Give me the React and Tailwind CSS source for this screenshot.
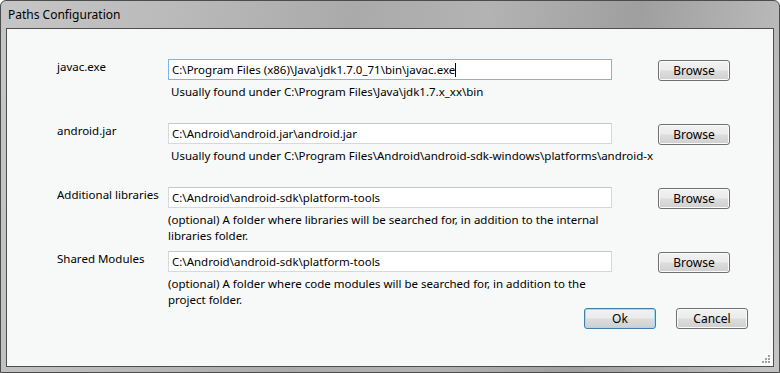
import React from 'react';

const font = { fontFamily: '"Noto Sans", "Liberation Sans", sans-serif' };

const TextBox = ({ value, focused }) => (
  <div
    className={
      'h-[21px] w-[444px] flex items-center pl-[3px] bg-white border text-[11.5px] text-black whitespace-nowrap ' +
      (focused ? 'border-[#7eb4ea]' : 'border-[#d5d8dc] border-t-[#c4c8cd]')
    }
  >
    <span>{value}</span>
    {focused && <span className="w-px h-[14px] bg-black" />}
  </div>
);

const WinButton = ({ children, primary }) => (
  <button
    className={
      'block h-[21px] w-[72px] rounded-[3px] border text-[12px] text-black leading-none ' +
      'bg-[linear-gradient(to_bottom,#f2f2f2_0%,#ebebeb_48%,#dddddd_52%,#cfcfcf_100%)] ' +
      (primary
        ? 'border-[#3c7fb1] shadow-[inset_0_0_0_1px_#9fdcf7]'
        : 'border-[#707070] shadow-[inset_0_0_0_1px_#fbfbfb]')
    }
  >
    {children}
  </button>
);

const Row = ({ label, value, focused, hint, hintPad, rowHeight }) => (
  <div className={'flex ' + rowHeight}>
    <div className="w-[111px] text-[11.5px] leading-[16px] text-black whitespace-nowrap">{label}</div>
    <div className="flex flex-col w-[444px]">
      <TextBox value={value} focused={focused} />
      <div className={'text-[11.5px] leading-[15.5px] text-black whitespace-nowrap ' + hintPad}>{hint}</div>
    </div>
    <div className="ml-[46px] flex items-start pt-px">
      <WinButton>Browse</WinButton>
    </div>
  </div>
);

const Grip = () => (
  <svg width="12" height="12" viewBox="0 0 12 12" className="absolute right-[2px] bottom-[2px]">
    {[
      [9, 3],
      [9, 6],
      [6, 6],
      [9, 9],
      [6, 9],
      [3, 9],
    ].map(([x, y]) => (
      <g key={x + '-' + y}>
        <rect x={x + 1} y={y + 1} width="2" height="2" fill="#ffffff" />
        <rect x={x} y={y} width="2" height="2" fill="#a0a0a0" />
      </g>
    ))}
  </svg>
);

const App = () => {
  return (
    <div
      className="w-[780px] h-[373px] flex flex-col rounded-t-[6px] border border-[#4c4c4c] bg-[linear-gradient(100deg,#c6c6c6_0%,#b9b9b9_22%,#aaaaaa_42%,#b3b3b3_58%,#9f9f9f_76%,#c4c4c4_100%)]"
      style={font}
    >
      <div className="h-[27px] flex items-center pl-[7px] text-[12px] text-black">Paths Configuration</div>
      <div className="relative mx-[5px] h-[339px] border border-[#4d4d4d] bg-[#f7f8f8] flex flex-col pt-[30px] pl-[50px]">
        <Row
          label="javac.exe"
          value="C:\Program Files (x86)\Java\jdk1.7.0_71\bin\javac.exe"
          focused
          hint="Usually found under C:\Program Files\Java\jdk1.7.x_xx\bin"
          hintPad="pl-[3px] pt-[4px]"
          rowHeight="h-[64px]"
        />
        <Row
          label="android.jar"
          value="C:\Android\android.jar\android.jar"
          hint="Usually found under C:\Program Files\Android\android-sdk-windows\platforms\android-x"
          hintPad="pl-[3px] pt-[4px]"
          rowHeight="h-[64px]"
        />
        <Row
          label="Additional libraries"
          value="C:\Android\android-sdk\platform-tools"
          hint={<>(optional) A folder where libraries will be searched for, in addition to the internal<br />libraries folder.</>}
          hintPad="pt-[4px]"
          rowHeight="h-[64px]"
        />
        <Row
          label="Shared Modules"
          value="C:\Android\android-sdk\platform-tools"
          hint={<>(optional) A folder where code modules will be searched for, in addition to the<br />project folder.</>}
          hintPad="pt-[4px]"
          rowHeight="h-[57px]"
        />
        <div className="flex justify-end gap-[20px] pr-[25px]">
          <WinButton primary>Ok</WinButton>
          <WinButton>Cancel</WinButton>
        </div>
        <Grip />
      </div>
    </div>
  );
};

export default App;
